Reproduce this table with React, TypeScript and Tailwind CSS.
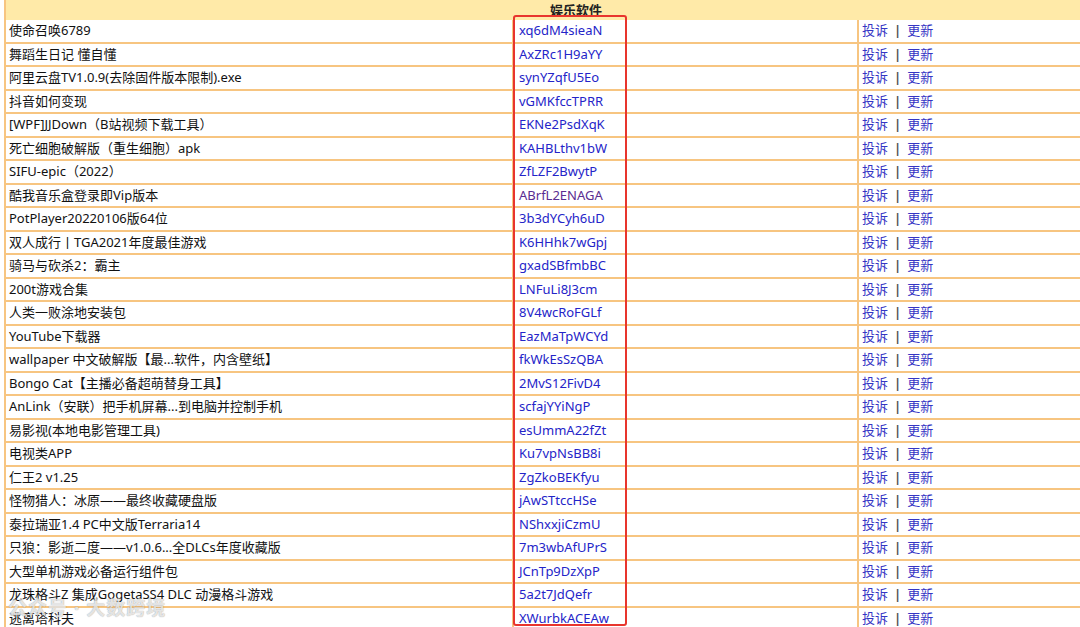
const rows: { name: string; code: string; visited?: boolean }[] = [
  { name: "使命召唤6789", code: "xq6dM4sieaN" },
  { name: "舞蹈生日记 懂自懂", code: "AxZRc1H9aYY" },
  { name: "阿里云盘TV1.0.9(去除固件版本限制).exe", code: "synYZqfU5Eo" },
  { name: "抖音如何变现", code: "vGMKfccTPRR" },
  { name: "[WPF]JJDown（B站视频下载工具）", code: "EKNe2PsdXqK" },
  { name: "死亡细胞破解版（重生细胞）apk", code: "KAHBLthv1bW" },
  { name: "SIFU-epic（2022）", code: "ZfLZF2BwytP" },
  { name: "酷我音乐盒登录即Vip版本", code: "ABrfL2ENAGA", visited: true },
  { name: "PotPlayer20220106版64位", code: "3b3dYCyh6uD" },
  { name: "双人成行丨TGA2021年度最佳游戏", code: "K6HHhk7wGpj" },
  { name: "骑马与砍杀2：霸主", code: "gxadSBfmbBC" },
  { name: "200t游戏合集", code: "LNFuLi8J3cm" },
  { name: "人类一败涂地安装包", code: "8V4wcRoFGLf" },
  { name: "YouTube下载器", code: "EazMaTpWCYd" },
  { name: "wallpaper 中文破解版【最...软件，内含壁纸】", code: "fkWkEsSzQBA" },
  { name: "Bongo Cat【主播必备超萌替身工具】", code: "2MvS12FivD4" },
  { name: "AnLink（安联）把手机屏幕...到电脑并控制手机", code: "scfajYYiNgP" },
  { name: "易影视(本地电影管理工具)", code: "esUmmA22fZt" },
  { name: "电视类APP", code: "Ku7vpNsBB8i" },
  { name: "仁王2 v1.25", code: "ZgZkoBEKfyu" },
  { name: "怪物猎人：冰原——最终收藏硬盘版", code: "jAwSTtccHSe" },
  { name: "泰拉瑞亚1.4 PC中文版Terraria14", code: "NShxxjiCzmU" },
  { name: "只狼：影逝二度——v1.0.6...全DLCs年度收藏版", code: "7m3wbAfUPrS" },
  { name: "大型单机游戏必备运行组件包", code: "JCnTp9DzXpP" },
  { name: "龙珠格斗Z 集成GogetaSS4 DLC 动漫格斗游戏", code: "5a2t7JdQefr" },
  { name: "逃离塔科夫", code: "XWurbkACEAw" },
];

export default function App() {
  return (
    <div className="relative h-[627px] w-[1080px] overflow-hidden bg-white font-['Noto_Sans','Noto_Sans_CJK_SC',sans-serif] text-[13px] text-[#111]">
      <div className="ml-[4px] border-l-2 border-[#f7c581]">
        {/* header */}
        <div className="flex h-[20px] items-center bg-[#ffeaa8] pl-[544px] font-bold leading-none text-[#222]">
          娱乐软件
        </div>

        {rows.map((r) => (
          <div
            key={r.code}
            className="grid h-[23.5px] grid-cols-[508px_345px_1fr] border-b-2 border-[#f7c581] leading-none"
          >
            <div className="flex items-center truncate border-r-2 border-[#f7c581] pl-[3px]">{r.name}</div>
            <div
              className={
                "flex items-center border-r-2 border-[#f7c581] pl-[5px] " +
                (r.visited ? "text-[#5a2d91]" : "text-[#2424c8]")
              }
            >
              {r.code}
            </div>
            <div className="flex items-center pl-[3px] text-[#3535c4]">
              <span>投诉</span>
              <span className="mx-[6px] font-bold text-[#555]">|</span>
              <span>更新</span>
            </div>
          </div>
        ))}
      </div>

      {/* highlight box around the codes */}
      <div className="pointer-events-none absolute left-[513px] top-[15px] h-[611px] w-[114px] rounded-[3px] border-2 border-[#e8352d]" />

      {/* watermark */}
      <div className="pointer-events-none absolute left-[8px] top-[594px] text-[19px] font-bold tracking-[1px] text-white/75 [text-shadow:0_0_1px_rgba(0,0,0,0.45)]">
        公众号 · 大数跨境
      </div>
    </div>
  );
}
